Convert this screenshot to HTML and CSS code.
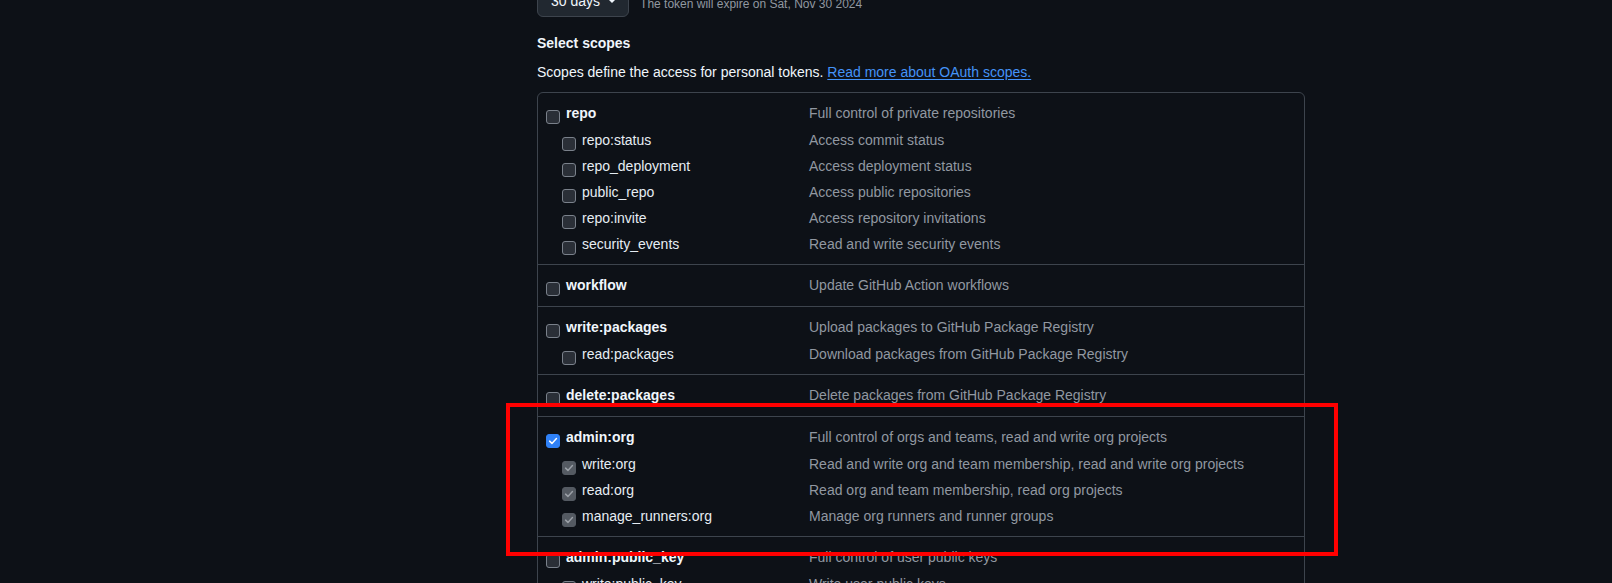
FILE: index.html
```html
<!DOCTYPE html>
<html lang="en">
<head>
<meta charset="utf-8">
<title>Select scopes</title>
<link rel="stylesheet" href="styles.css">
</head>
<body>
<main class="main">
  <div class="expiry">
    <button class="select-btn" type="button"><span>30 days</span><span class="caret"></span></button>
    <span class="note">The token will expire on Sat, Nov 30 2024</span>
  </div>
  <h3 class="heading">Select scopes</h3>
  <p class="lead">Scopes define the access for personal tokens. <a class="link" href="#">Read more about OAuth scopes.</a></p>

  <div class="scopes">
    <div class="group">
      <div class="row top"><span class="cb"></span><span class="name">repo</span><span class="desc">Full control of private repositories</span></div>
      <div class="row sub"><span class="cb"></span><span class="name">repo:status</span><span class="desc">Access commit status</span></div>
      <div class="row sub"><span class="cb"></span><span class="name">repo_deployment</span><span class="desc">Access deployment status</span></div>
      <div class="row sub"><span class="cb"></span><span class="name">public_repo</span><span class="desc">Access public repositories</span></div>
      <div class="row sub"><span class="cb"></span><span class="name">repo:invite</span><span class="desc">Access repository invitations</span></div>
      <div class="row sub"><span class="cb"></span><span class="name">security_events</span><span class="desc">Read and write security events</span></div>
    </div>
    <div class="group">
      <div class="row top"><span class="cb"></span><span class="name">workflow</span><span class="desc">Update GitHub Action workflows</span></div>
    </div>
    <div class="group">
      <div class="row top"><span class="cb"></span><span class="name">write:packages</span><span class="desc">Upload packages to GitHub Package Registry</span></div>
      <div class="row sub"><span class="cb"></span><span class="name">read:packages</span><span class="desc">Download packages from GitHub Package Registry</span></div>
    </div>
    <div class="group">
      <div class="row top"><span class="cb"></span><span class="name">delete:packages</span><span class="desc">Delete packages from GitHub Package Registry</span></div>
    </div>
    <div class="group">
      <div class="row top"><span class="cb checked"><svg viewBox="0 0 16 16"><polyline points="3.5,8.2 6.6,11.2 12.6,4.8" fill="none" stroke="#ffffff" stroke-width="2" stroke-linecap="round" stroke-linejoin="round"/></svg></span><span class="name">admin:org</span><span class="desc">Full control of orgs and teams, read and write org projects</span></div>
      <div class="row sub"><span class="cb disabled"><svg viewBox="0 0 16 16"><polyline points="3.5,8.2 6.6,11.2 12.6,4.8" fill="none" stroke="#9ba0a7" stroke-width="2" stroke-linecap="round" stroke-linejoin="round"/></svg></span><span class="name">write:org</span><span class="desc">Read and write org and team membership, read and write org projects</span></div>
      <div class="row sub"><span class="cb disabled"><svg viewBox="0 0 16 16"><polyline points="3.5,8.2 6.6,11.2 12.6,4.8" fill="none" stroke="#9ba0a7" stroke-width="2" stroke-linecap="round" stroke-linejoin="round"/></svg></span><span class="name">read:org</span><span class="desc">Read org and team membership, read org projects</span></div>
      <div class="row sub"><span class="cb disabled"><svg viewBox="0 0 16 16"><polyline points="3.5,8.2 6.6,11.2 12.6,4.8" fill="none" stroke="#9ba0a7" stroke-width="2" stroke-linecap="round" stroke-linejoin="round"/></svg></span><span class="name">manage_runners:org</span><span class="desc">Manage org runners and runner groups</span></div>
    </div>
    <div class="group">
      <div class="row top"><span class="cb"></span><span class="name">admin:public_key</span><span class="desc">Full control of user public keys</span></div>
      <div class="row sub"><span class="cb"></span><span class="name">write:public_key</span><span class="desc">Write user public keys</span></div>
      <div class="row sub"><span class="cb"></span><span class="name">read:public_key</span><span class="desc">Read user public keys</span></div>
    </div>
  </div>
</main>
<div class="highlight"></div>
</body>
</html>
```

FILE: styles.css
```css
html, body {
  margin: 0;
  padding: 0;
  background: #0d1117;
  height: 583px;
  overflow: hidden;
}

body {
  position: relative;
  font-family: "Liberation Sans", Arial, sans-serif;
  font-size: 14px;
  line-height: 20px;
  color: #f0f6fc;
}

.main {
  width: 768px;
  margin-left: 537px;
  margin-top: -15px;
}

.expiry {
  display: flex;
  align-items: center;
  height: 32px;
}

.select-btn {
  box-sizing: border-box;
  height: 32px;
  display: flex;
  align-items: center;
  padding: 0 12px 0 13px;
  background: #212830;
  border: 1px solid #3d444d;
  border-radius: 6px;
  color: #f0f6fc;
  font-family: "Liberation Sans", Arial, sans-serif;
  font-size: 14px;
  white-space: nowrap;
}

.caret {
  margin-left: 8px;
  width: 0;
  height: 0;
  border-left: 4px solid transparent;
  border-right: 4px solid transparent;
  border-top: 4px solid #f0f6fc;
}

.note {
  margin-left: 11px;
  margin-top: 5px;
  font-size: 12px;
  color: #9198a1;
  white-space: nowrap;
}

.heading {
  margin: 16px 0 0;
  font-size: 14px;
  line-height: 20px;
  font-weight: 700;
}

.lead {
  margin: 9px 0 0;
}

.link {
  color: #4493f8;
  text-decoration: underline;
  text-underline-offset: 2px;
}

.scopes {
  margin-top: 10px;
  border: 1px solid #3d444d;
  border-radius: 6px;
}

.group {
  padding: 7px 8px;
}

.group + .group {
  border-top: 1px solid #3d444d;
}

.row {
  display: grid;
  grid-template-columns: 20px 243px 1fr;
  align-items: center;
  height: 26px;
}

.row.top {
  margin-bottom: 1px;
}

.row.sub {
  grid-template-columns: 36px 227px 1fr;
}

.row.sub .cb {
  margin-left: 16px;
}

.cb {
  box-sizing: border-box;
  width: 14px;
  height: 14px;
  margin-top: 7px;
  border: 1px solid #7a818b;
  border-radius: 3px;
  background: #2a2f37;
  display: flex;
  align-items: center;
  justify-content: center;
}

.cb svg {
  display: block;
  width: 12px;
  height: 12px;
}

.cb.checked {
  background: #2f81f7;
  border-color: #2f81f7;
}

.cb.disabled {
  background: #545a62;
  border-color: #545a62;
}

.name {
  white-space: nowrap;
}

.row.top .name {
  font-weight: 700;
}

.row.sub .name {
  color: #e6edf3;
}

.desc {
  color: #9198a1;
  white-space: nowrap;
}

.highlight {
  position: absolute;
  left: 506px;
  top: 403px;
  width: 832px;
  height: 153px;
  box-sizing: border-box;
  border: 4px solid #ff0000;
  pointer-events: none;
}
```
